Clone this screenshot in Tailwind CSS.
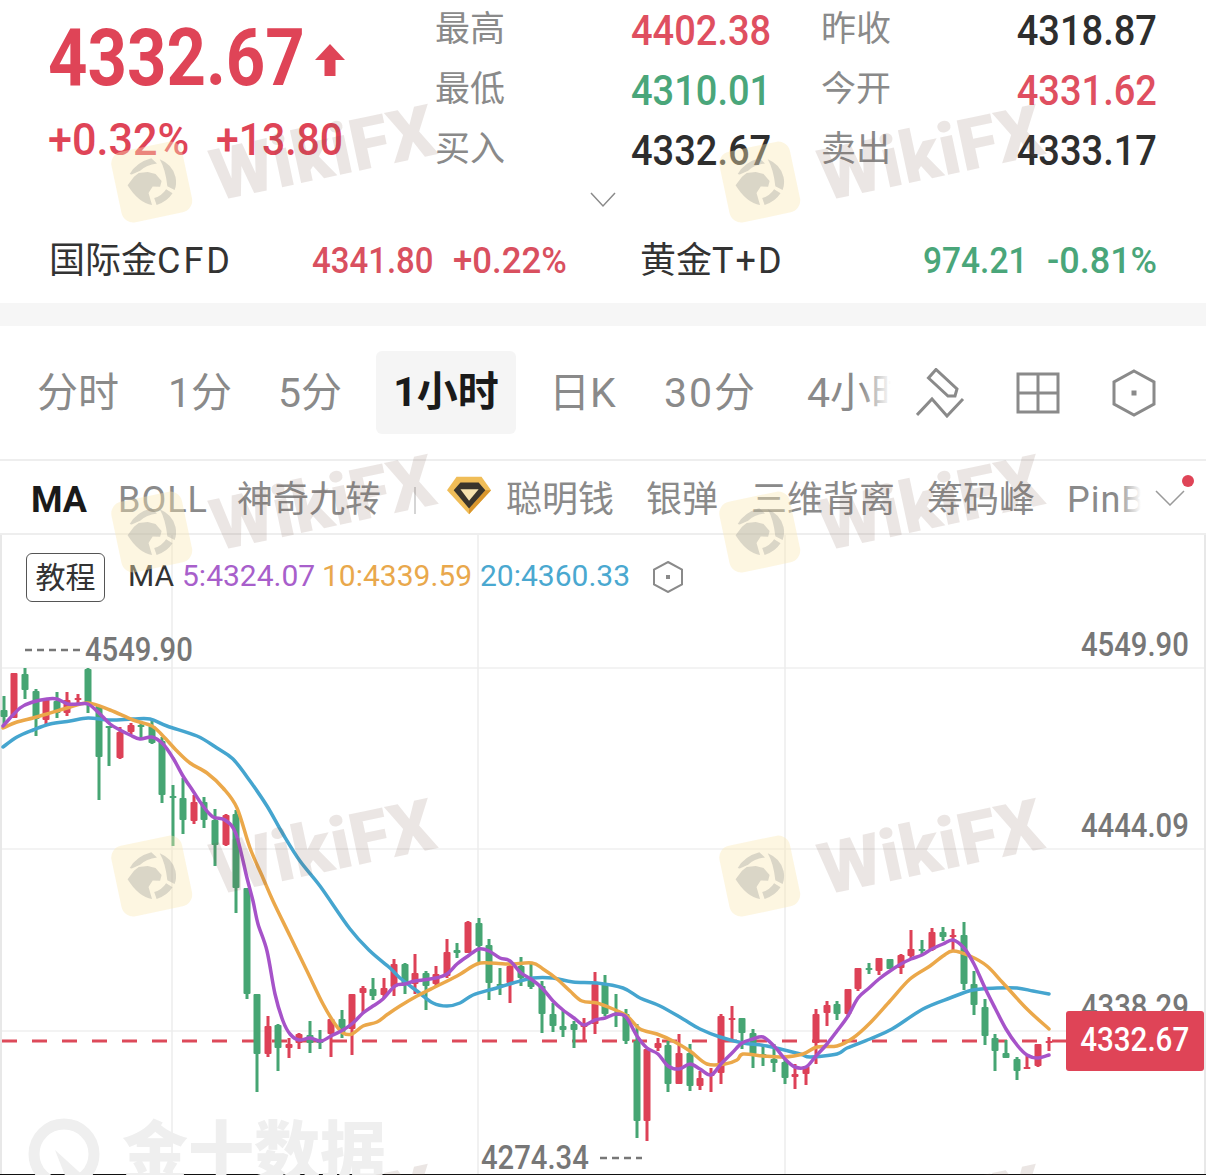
<!DOCTYPE html>
<html lang="zh-CN">

<head>
  <meta charset="UTF-8">
  <title>黄金行情</title>
  <script src="https://cdn.jsdelivr.net/npm/@tailwindcss/browser@4"></script>
</head>

<body class="bg-white">
  <div class="relative w-[1206px] h-[1175px] overflow-hidden bg-white font-['Roboto','Noto_Sans_CJK_SC',sans-serif]">

    <!-- quote header -->
    <header class="h-[303px]">
      <div class="flex h-[180px]">
        <div class="w-[435px] pl-[48px]">
          <div class="flex items-center h-[116px]">
            <span class="block w-[266px] origin-left scale-x-[.86] text-[80px] leading-none font-bold text-[#df4457]">4332.67</span>
            <svg class="mt-[4px]" width="32" height="34" viewBox="0 0 32 34"><path d="M16 1 L31 17 H21.500 V33 H10.500 V17 H1 Z" fill="#df4457"/></svg>
          </div>
          <div class="flex h-[48px] items-center text-[44px] leading-none font-medium text-[#df4457]">
            <span class="w-[168px] origin-left scale-x-[.98]">+0.32%</span><span class="origin-left scale-x-[.93]">+13.80</span>
          </div>
        </div>
        <div class="flex-1 grid grid-cols-[196px_190px_1fr_auto] grid-rows-[60px_60px_60px] items-center pr-[49px] text-[35px] text-[#8a8a8a]">
          <span>最高</span><span class="origin-left scale-x-[.905] text-[#df4f60] text-[42px] font-medium">4402.38</span>
          <span>昨收</span><span class="origin-right scale-x-[.905] text-[#2e2e2e] text-[42px] font-medium">4318.87</span>
          <span>最低</span><span class="origin-left scale-x-[.905] text-[#4aa67a] text-[42px] font-medium">4310.01</span>
          <span>今开</span><span class="origin-right scale-x-[.905] text-[#df4f60] text-[42px] font-medium">4331.62</span>
          <span>买入</span><span class="origin-left scale-x-[.905] text-[#2e2e2e] text-[42px] font-medium">4332.67</span>
          <span>卖出</span><span class="origin-right scale-x-[.905] text-[#2e2e2e] text-[42px] font-medium">4333.17</span>
        </div>
      </div>
      <div class="flex justify-center h-[40px] items-center">
        <svg width="26" height="16" viewBox="0 0 26 16"><path d="M1 1 L13 14 L25 1" fill="none" stroke="#8a8a8a" stroke-width="1.500"/></svg>
      </div>
      <div class="flex items-center h-[80px] pt-[1px] pl-[49px] pr-[49px] text-[36px] text-[#333]">
        <span class="w-[263px]">国际金<span class="tracking-[3px]">CFD</span></span>
        <span class="w-[141px] origin-left scale-x-[.915] text-[36px] font-medium text-[#d9505f]">4341.80</span>
        <span class="w-[187px] origin-left scale-x-[.965] text-[36px] font-medium text-[#d9505f]">+0.22%</span>
        <span>黄金<span class="tracking-[2px]">T+D</span></span>
        <span class="ml-auto w-[124px] origin-left scale-x-[.93] text-[36px] font-medium text-[#4aa67a]">974.21</span>
        <span class="w-[110px] text-right text-[36px] font-medium text-[#4aa67a]">-0.81%</span>
      </div>
    </header>

    <div class="h-[23px] bg-[#f6f6f6]"></div>

    <!-- period tabs -->
    <nav class="flex items-center h-[135px] pl-[37px] border-b-2 border-[#eeeeee] text-[41px] text-[#8a8a8a]">
      <span class="w-[131px] pt-[2px]">分时</span>
      <span class="w-[110px] pt-[2px]">1分</span>
      <span class="w-[98px] pt-[2px]">5分</span>
      <span class="w-[173px]"><span class="flex items-center justify-center w-[140px] h-[83px] rounded-md bg-[#f5f5f5] font-bold text-[#1a1a1a]">1小时</span></span>
      <span class="w-[115px] pt-[2px]">日K</span>
      <span class="w-[143px] pt-[2px] tracking-[2px]">30分</span>
      <span class="relative w-[84px] pt-[2px] overflow-hidden whitespace-nowrap">4小时<span class="absolute inset-y-0 right-0 w-[30px] bg-linear-to-r from-white/0 to-white"></span></span>
      <svg class="ml-[25px]" width="50" height="50" viewBox="0 0 50 50" fill="none" stroke="#8a8a8a" stroke-width="3">
        <path d="M20 1.500 L12.500 10 L32 28 L39 28 L41 21 Z"/>
        <path d="M1 47 L16 31 L31 48 L47 31"/>
      </svg>
      <svg class="ml-[50px]" width="44" height="44" viewBox="0 0 44 44" fill="none" stroke="#8a8a8a" stroke-width="3"><path d="M2 3 H42 V41 H2 Z M22 3 V41 M2 22 H42"/></svg>
      <svg class="ml-[52px]" width="44" height="48" viewBox="0 0 44 48" fill="none" stroke="#8a8a8a" stroke-width="3"><path d="M22 2 L42 13 V35 L22 46 L2 35 V13 Z"/><rect x="19.500" y="21.500" width="5" height="5" fill="#8a8a8a" stroke="none"/></svg>
    </nav>

    <!-- indicator tabs -->
    <nav class="flex items-center h-[74px] pt-[6px] pl-[31px] border-b-2 border-[#eeeeee] text-[36px] text-[#8a8a8a] whitespace-nowrap">
      <span class="w-[87px] font-bold text-[#1a1a1a]">MA</span>
      <span class="w-[119px] tracking-[1px]">BOLL</span>
      <span class="w-[177px]">神奇九转</span>
      <span class="w-[33px]"><span class="block w-[2px] h-[27px] bg-[#d5d5d5]"></span></span>
      <svg class="mr-[13px] mb-[8px]" width="46" height="40" viewBox="0 0 48 40">
        <path d="M10 0 H36 L46 14 L23 39 L0 14 Z" fill="#f0bd57"/>
        <path d="M46 14 L23 39 L23 33 L40 14 Z" fill="#d9962d"/>
        <path d="M7 14 L14 6 H33 L40 14 L23 33 Z" fill="#3a352c"/>
        <path d="M14 13 H33 L23 25 Z" fill="#f7e3ae"/>
      </svg>
      <span class="w-[140px]">聪明钱</span>
      <span class="w-[105px]">银弹</span>
      <span class="w-[176px]">三维背离</span>
      <span class="w-[140px]">筹码峰</span>
      <span class="relative w-[74px] overflow-hidden tracking-[1px]">PinB<span class="absolute inset-y-0 right-0 w-[24px] bg-linear-to-r from-white/0 to-white"></span></span>
      <svg class="ml-[14px] mb-[4px]" width="30" height="16" viewBox="0 0 30 16"><path d="M1 1 L15 15 L29 1" fill="none" stroke="#9a9a9a" stroke-width="1.500"/></svg>
      <span class="absolute left-[1182px] top-[475px] w-[12px] h-[12px] rounded-full bg-[#df4457]"></span>
    </nav>

    <!-- chart -->
    <section class="relative h-[639px]">
      <svg id="chart" class="absolute inset-0" width="1206" height="639" viewBox="0 534 1206 639"></svg>

      <div class="relative flex items-center h-[84px] pl-[26px] text-[30px] whitespace-nowrap">
        <span class="flex items-center justify-center w-[79px] h-[49px] rounded-md border border-[#555] text-[#333]">教程</span>
        <span class="ml-[23px] w-[54px] mb-[3px] text-[#333]">MA</span>
        <span class="w-[140px] mb-[3px] text-[#a85fcb]">5:4324.07</span>
        <span class="w-[158px] mb-[3px] text-[#e9a84c]">10:4339.59</span>
        <span class="w-[173px] mb-[3px] text-[#4aa8d0]">20:4360.33</span>
        <svg width="30" height="32" viewBox="0 0 30 32" fill="none" stroke="#8a8a8a" stroke-width="2"><path d="M15 1 L29 8.500 V23.500 L15 31 L1 23.500 V8.500 Z"/><rect x="13" y="14" width="4" height="4" fill="#8a8a8a" stroke="none"/></svg>
      </div>

      <span class="absolute left-[85px] top-[94px] origin-left scale-x-[.86] text-[34px] leading-[40px] font-medium text-[#777]">4549.90</span>
      <span class="absolute left-[1081px] top-[89px] origin-left scale-x-[.86] text-[34px] leading-[40px] font-medium text-[#777]">4549.90</span>
      <span class="absolute left-[1081px] top-[270px] origin-left scale-x-[.86] text-[34px] leading-[40px] font-medium text-[#777]">4444.09</span>
      <span class="absolute left-[1081px] top-[451px] origin-left scale-x-[.86] text-[34px] leading-[40px] font-medium text-[#777]">4338.29</span>
      <span class="absolute left-[481px] top-[602px] origin-left scale-x-[.86] text-[34px] leading-[40px] font-medium text-[#777]">4274.34</span>
      <div class="absolute left-[1066px] top-[476px] flex items-center justify-center w-[138px] h-[60px] rounded-[3px] bg-[#df4457]">
        <span class="mb-[3px] scale-x-[.87] text-[34px] font-medium text-white">4332.67</span>
      </div>

      <!-- 金十 watermark -->
      <div class="absolute left-[28px] top-[583px] flex items-start gap-[22px] text-[#efefef]">
        <svg width="72" height="72" viewBox="0 0 72 72" fill="none"><circle cx="36" cy="36" r="30" stroke="#efefef" stroke-width="11"/><path d="M27 32 L60 62 L38 60 Z" fill="#efefef"/></svg>
        <span class="text-[66px] leading-[72px] font-black">金十数据</span>
      </div>
    </section>
    <div class="h-[2px] bg-[#111]"></div>

    <!-- WikiFX watermarks -->
    <div class="absolute inset-0 pointer-events-none">
      <svg class="hidden"><symbol id="eagle" viewBox="0 0 60 60"><path d="M3 28 L12 20 L18 17 L28 18 L36 22 L41 31 L38 37 L30 35 L24 41 L25 55 Q11 50 3 28 Z M8 16 Q18 5 35 4 L40 11 Q28 10 20 15 L10 17 Z M44 7 Q57 16 57 30 Q57 38 53 44 L46 38 Q48 20 44 7 Z M30 56 Q42 55 50 47 L44 41 Q38 47 29 48 Z" fill="#8a8a8a" fill-opacity=".3"/></symbol></svg>

      <div class="absolute left-[113px] top-[112px] flex items-center gap-[24px] -rotate-[12deg]">
        <div class="flex items-center justify-center w-[72px] h-[72px] rounded-xl bg-[#fbe9b5]/40"><svg width="54" height="54"><use href="#eagle"/></svg></div>
        <span class="mt-[16px] text-[72px] leading-none font-black text-[#7a5a4a]/15">WikiFX</span>
      </div>
      <div class="absolute left-[721px] top-[112px] flex items-center gap-[24px] -rotate-[12deg]">
        <div class="flex items-center justify-center w-[72px] h-[72px] rounded-xl bg-[#fbe9b5]/40"><svg width="54" height="54"><use href="#eagle"/></svg></div>
        <span class="mt-[16px] text-[72px] leading-none font-black text-[#7a5a4a]/15">WikiFX</span>
      </div>
      <div class="absolute left-[113px] top-[462px] flex items-center gap-[24px] -rotate-[12deg]">
        <div class="flex items-center justify-center w-[72px] h-[72px] rounded-xl bg-[#fbe9b5]/40"><svg width="54" height="54"><use href="#eagle"/></svg></div>
        <span class="mt-[16px] text-[72px] leading-none font-black text-[#7a5a4a]/15">WikiFX</span>
      </div>
      <div class="absolute left-[721px] top-[462px] flex items-center gap-[24px] -rotate-[12deg]">
        <div class="flex items-center justify-center w-[72px] h-[72px] rounded-xl bg-[#fbe9b5]/40"><svg width="54" height="54"><use href="#eagle"/></svg></div>
        <span class="mt-[16px] text-[72px] leading-none font-black text-[#7a5a4a]/15">WikiFX</span>
      </div>
      <div class="absolute left-[113px] top-[806px] flex items-center gap-[24px] -rotate-[12deg]">
        <div class="flex items-center justify-center w-[72px] h-[72px] rounded-xl bg-[#fbe9b5]/40"><svg width="54" height="54"><use href="#eagle"/></svg></div>
        <span class="mt-[16px] text-[72px] leading-none font-black text-[#7a5a4a]/15">WikiFX</span>
      </div>
      <div class="absolute left-[721px] top-[806px] flex items-center gap-[24px] -rotate-[12deg]">
        <div class="flex items-center justify-center w-[72px] h-[72px] rounded-xl bg-[#fbe9b5]/40"><svg width="54" height="54"><use href="#eagle"/></svg></div>
        <span class="mt-[16px] text-[72px] leading-none font-black text-[#7a5a4a]/15">WikiFX</span>
      </div>
      <div class="absolute left-[113px] top-[1172px] flex items-center gap-[24px] -rotate-[12deg]">
        <div class="flex items-center justify-center w-[72px] h-[72px] rounded-xl bg-[#fbe9b5]/40"><svg width="54" height="54"><use href="#eagle"/></svg></div>
        <span class="mt-[16px] text-[72px] leading-none font-black text-[#7a5a4a]/15">WikiFX</span>
      </div>
      <div class="absolute left-[721px] top-[1172px] flex items-center gap-[24px] -rotate-[12deg]">
        <div class="flex items-center justify-center w-[72px] h-[72px] rounded-xl bg-[#fbe9b5]/40"><svg width="54" height="54"><use href="#eagle"/></svg></div>
        <span class="mt-[16px] text-[72px] leading-none font-black text-[#7a5a4a]/15">WikiFX</span>
      </div>
    </div>
  </div>

  <script>
    // candles: x, wick top, wick bottom, body top, body bottom, colour (page pixels)
    const candles = [
      [4,695,725,709,716,'g'],[14,672,717,672,717,'r'],[25,667,698,673,689,'g'],[36,688,735,690,718,'g'],[46,697,723,698,719,'r'],
      [57,691,717,700,712,'g'],[67,691,715,699,712,'r'],[78,693,704,697,699,'r'],[88,667,712,668,703,'g'],[99,704,799,705,756,'g'],
      [109,725,765,725,726,'g'],[120,726,758,731,757,'r'],[131,722,733,724,731,'r'],[141,722,738,724,725,'g'],[152,720,743,725,742,'g'],
      [162,736,802,740,794,'g'],[173,784,845,795,796,'g'],[183,777,833,797,819,'g'],[194,794,823,801,820,'r'],[204,796,827,801,819,'g'],
      [215,808,865,819,844,'g'],[226,813,845,814,844,'r'],[236,809,912,813,887,'g'],[247,887,998,887,993,'g'],[257,993,1091,993,1053,'g'],
      [268,1015,1056,1025,1053,'r'],[278,1023,1070,1024,1047,'g'],[289,1037,1057,1043,1047,'r'],[299,1032,1048,1033,1042,'r'],[310,1020,1052,1034,1042,'g'],
      [320,1029,1048,1038,1042,'g'],[331,1018,1056,1018,1033,'r'],[342,1009,1037,1018,1031,'g'],[352,993,1054,993,1028,'r'],[363,985,1012,987,992,'r'],
      [373,977,999,988,995,'g'],[384,977,997,987,994,'r'],[394,958,995,963,986,'r'],[405,962,993,963,983,'g'],[415,953,993,972,983,'r'],
      [426,970,1009,972,985,'g'],[436,965,985,973,983,'r'],[447,938,977,951,975,'r'],[457,942,957,949,952,'g'],[468,920,952,921,952,'r'],
      [479,917,962,922,945,'g'],[489,938,999,944,982,'g'],[500,967,994,983,985,'g'],[510,962,1002,965,982,'r'],[521,956,985,965,977,'g'],
      [531,962,988,977,986,'g'],[542,980,1032,985,1013,'g'],[553,1002,1031,1013,1025,'g'],[563,1010,1036,1025,1029,'g'],[574,1020,1047,1023,1029,'g'],
      [584,1017,1040,1023,1026,'r'],[595,971,1033,983,1023,'r'],[605,974,1015,983,1013,'g'],[616,993,1026,1013,1014,'g'],[626,1008,1043,1013,1040,'g'],
      [637,1023,1137,1040,1120,'g'],[647,1048,1140,1048,1120,'r'],[658,1037,1050,1042,1047,'r'],[668,1040,1091,1044,1083,'g'],[679,1033,1083,1052,1083,'r'],
      [690,1043,1090,1052,1085,'g'],[700,1070,1089,1077,1085,'r'],[711,1067,1091,1072,1075,'r'],[721,1013,1083,1015,1072,'r'],[732,1005,1040,1017,1018,'r'],
      [742,1017,1048,1017,1032,'g'],[753,1028,1067,1032,1053,'g'],[763,1045,1065,1053,1056,'g'],[774,1043,1071,1058,1062,'g'],[785,1058,1083,1061,1077,'g'],
      [795,1063,1088,1073,1076,'r'],[806,1065,1084,1065,1073,'r'],[816,1008,1063,1013,1042,'r'],[827,1000,1025,1004,1012,'r'],[837,1000,1019,1003,1013,'g'],
      [848,988,1016,988,1013,'r'],[858,967,990,967,988,'r'],[869,962,973,967,969,'g'],[879,957,974,957,970,'r'],[890,958,968,958,968,'g'],
      [901,953,973,954,967,'r'],[911,929,957,948,955,'r'],[922,939,953,948,949,'g'],[932,927,950,931,949,'r'],[943,926,940,931,936,'g'],
      [953,928,950,934,936,'r'],[964,921,989,934,983,'g'],[974,970,1014,983,1004,'g'],[985,998,1044,1006,1035,'g'],[995,1033,1070,1037,1050,'g'],
      [1006,1039,1057,1052,1057,'g'],[1017,1056,1079,1058,1070,'g'],[1027,1055,1068,1066,1068,'r'],[1038,1043,1066,1043,1065,'r'],[1049,1036,1050,1040,1042,'r']
    ];

    const ma5 = '3,725 20,707 33,701 47,698 57,698 68,703 78,703 88,703 99,712 110,723 120,729 130,734 140,738 152,736 163,743 173,757 183,775 193,790 203,805 213,816 225,819 236,833 247,877 253,900 258,923 267,950 275,993 283,1020 290,1033 299,1039 310,1037 321,1040 331,1035 343,1029 353,1022 363,1012 373,1005 383,998 395,985 405,983 415,980 436,977 447,973 457,963 468,955 479,948 489,950 500,957 510,960 521,972 531,978 542,987 553,1000 563,1009 574,1017 584,1024 595,1019 605,1017 616,1013 626,1016 637,1035 647,1047 658,1053 668,1065 679,1068 690,1063 700,1068 711,1074 721,1063 732,1052 742,1042 753,1038 763,1036 774,1045 785,1058 795,1066 806,1066 816,1055 827,1043 837,1030 848,1015 858,997 869,987 879,978 890,970 901,963 911,958 922,954 932,948 943,943 953,939 964,947 974,963 985,987 995,1007 1006,1028 1017,1044 1027,1054 1038,1057 1049,1054';
    const ma10 = '3,727 17,721 33,717 47,713 67,707 88,702 110,709 133,719 152,725 163,735 177,750 190,762 207,772 223,787 237,807 250,847 263,877 273,900 290,935 307,970 323,1003 335,1023 343,1032 352,1033 363,1025 377,1021 388,1013 400,1005 417,995 433,987 457,975 477,963 490,962 510,963 532,962 543,968 557,978 570,990 582,1000 597,1002 613,1008 627,1015 640,1028 657,1033 673,1040 690,1050 707,1063 725,1063 737,1059 743,1053 763,1055 783,1056 803,1053 817,1046 837,1045 853,1037 870,1022 890,1000 910,978 930,965 943,955 953,950 970,955 987,965 1003,982 1027,1008 1049,1028';
    const ma20 = '3,746 17,736 33,729 50,723 70,720 88,717 110,719 133,718 150,718 167,725 197,735 217,747 233,758 250,780 267,805 283,833 300,860 320,885 350,928 370,950 390,967 400,977 417,990 433,1002 447,1005 460,1002 473,994 493,988 513,982 533,977 553,977 573,981 597,982 623,987 640,997 660,1005 683,1018 700,1028 720,1036 743,1042 767,1045 800,1053 810,1056 837,1053 847,1047 870,1038 892,1028 923,1008 950,997 973,989 997,987 1017,987 1033,990 1049,993';

    const colors = { g: '#46a573', r: '#dd4157' };
    let svg = '';

    // turn a point list into a smooth catmull-rom path
    function smooth(str) {
      const p = str.split(' ').map(s => s.split(',').map(Number));
      let d = `M${p[0][0]} ${p[0][1]}`;
      for (let i = 0; i < p.length - 1; i++) {
        const a = p[i - 1] || p[i], b = p[i], c = p[i + 1], e = p[i + 2] || c;
        d += ` C${b[0] + (c[0] - a[0]) / 6} ${b[1] + (c[1] - a[1]) / 6} ${c[0] - (e[0] - b[0]) / 6} ${c[1] - (e[1] - b[1]) / 6} ${c[0]} ${c[1]}`;
      }
      return d;
    }

    // grid lines and frame
    [667, 848, 1030].forEach(y => { svg += `<line x1="0" x2="1206" y1="${y}" y2="${y}" stroke="#efefef" stroke-width="1.500"/>`; });
    [172, 478, 785].forEach(x => { svg += `<line x1="${x}" x2="${x}" y1="534" y2="1173" stroke="#ececec" stroke-width="1.500"/>`; });
    svg += '<line x1="1" x2="1" y1="534" y2="1173" stroke="#e8e8e8" stroke-width="2"/>';
    svg += '<line x1="1205" x2="1205" y1="534" y2="1173" stroke="#e8e8e8" stroke-width="2"/>';

    // high and low markers
    svg += '<line x1="25" x2="80" y1="649" y2="649" stroke="#777" stroke-width="2.500" stroke-dasharray="7 5"/>';
    svg += '<line x1="600" x2="642" y1="1157" y2="1157" stroke="#777" stroke-width="2.500" stroke-dasharray="7 5"/>';

    // last price line
    svg += '<line x1="2" x2="1066" y1="1040" y2="1040" stroke="#dd4a5a" stroke-width="3" stroke-dasharray="15 15"/>';

    candles.forEach(([x, wt, wb, bt, bb, c]) => {
      svg += `<rect x="${x - 1.5}" y="${wt}" width="3" height="${wb - wt}" fill="${colors[c]}"/>`;
      svg += `<rect x="${x - 3.5}" y="${bt}" width="7" height="${Math.max(bb - bt, 2)}" rx="1" fill="${colors[c]}"/>`;
    });

    [[ma20, '#45a5cf'], [ma10, '#eba84a'], [ma5, '#a653c9']].forEach(([pts, col]) => {
      svg += `<path d="${smooth(pts)}" fill="none" stroke="${col}" stroke-width="3.500" stroke-linejoin="round" stroke-linecap="round"/>`;
    });

    document.getElementById('chart').innerHTML = svg;
  </script>
</body>

</html>
